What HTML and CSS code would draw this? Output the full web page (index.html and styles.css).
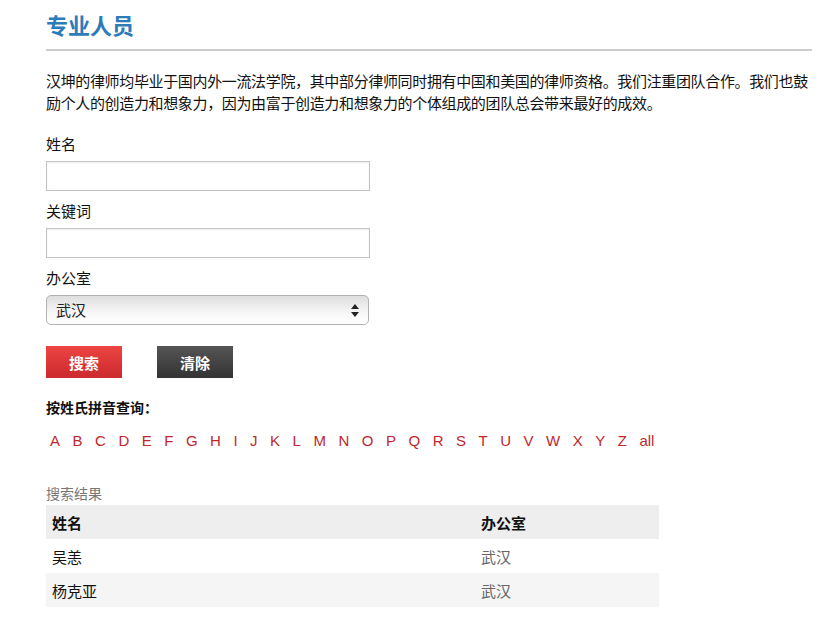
FILE: index.html
```html
<!DOCTYPE html>
<html lang="zh-CN">
<head>
    <meta charset="UTF-8">
    <title>专业人员</title>
    <link rel="stylesheet" href="styles.css">
</head>
<body>
    <div class="page">
        <h1 class="page-title">专业人员</h1>

        <p class="intro">汉坤的律师均毕业于国内外一流法学院，其中部分律师同时拥有中国和美国的律师资格。我们注重团队合作。我们也鼓励个人的创造力和想象力，因为由富于创造力和想象力的个体组成的团队总会带来最好的成效。</p>

        <form class="search-form">
            <label class="field-label first">姓名</label>
            <input class="text-input" type="text">

            <label class="field-label">关键词</label>
            <input class="text-input" type="text">

            <label class="field-label">办公室</label>
            <div class="select-wrap">
                <select class="select-input">
                    <option>武汉</option>
                </select>
                <svg class="select-arrows" width="8" height="13" viewBox="0 0 8 13">
                    <path d="M4 0 L8 5 L0 5 Z" fill="#222"/>
                    <path d="M0 8 L8 8 L4 13 Z" fill="#222"/>
                </svg>
            </div>

            <div class="buttons">
                <button type="button" class="btn btn-search">搜索</button>
                <button type="button" class="btn btn-clear">清除</button>
            </div>
        </form>

        <div class="pinyin-title">按姓氏拼音查询：</div>
        <div class="letters">
            <a href="#">A</a><a href="#">B</a><a href="#">C</a><a href="#">D</a><a href="#">E</a><a href="#">F</a><a href="#">G</a><a href="#">H</a><a href="#">I</a><a href="#">J</a><a href="#">K</a><a href="#">L</a><a href="#">M</a><a href="#">N</a><a href="#">O</a><a href="#">P</a><a href="#">Q</a><a href="#">R</a><a href="#">S</a><a href="#">T</a><a href="#">U</a><a href="#">V</a><a href="#">W</a><a href="#">X</a><a href="#">Y</a><a href="#">Z</a><a href="#">all</a>
        </div>

        <div class="results-title">搜索结果</div>
        <table class="results">
            <tr>
                <th class="col-name">姓名</th>
                <th>办公室</th>
            </tr>
            <tr>
                <td class="col-name">吴恙</td>
                <td class="office">武汉</td>
            </tr>
            <tr>
                <td class="col-name">杨克亚</td>
                <td class="office">武汉</td>
            </tr>
        </table>
    </div>
</body>
</html>
```

FILE: styles.css
```css
body {
    margin: 0;
    font-family: "Liberation Sans", "Noto Sans CJK SC", sans-serif;
    color: #111;
    background-color: #fff;
}
.page {
    width: 766px;
    padding: 0 18px 0 46px;
}
.page-title {
    margin: 12px 0 0;
    font-size: 22px;
    line-height: 30px;
    color: #2b7cb9;
    padding-bottom: 7px;
    border-bottom: 2px solid #ccc;
}
.intro {
    width: 772px;
    margin: 20px 0 0;
    font-size: 15px;
    letter-spacing: -0.35px;
    line-height: 22px;
}
.search-form {
    display: flex;
    flex-direction: column;
    align-items: flex-start;
}
.field-label {
    display: block;
    margin-top: 10px;
    margin-bottom: 5px;
    font-size: 15px;
    line-height: 22px;
}
.field-label.first {
    margin-top: 19px;
}
.text-input {
    box-sizing: border-box;
    width: 324px;
    height: 30px;
    margin: 0;
    border: 1px solid #c4c4c4;
    box-shadow: inset 0 1px 2px rgba(0, 0, 0, 0.08);
    font-size: 14px;
    padding: 0 8px;
}
.select-wrap {
    position: relative;
    width: 323px;
}
.select-input {
    box-sizing: border-box;
    width: 323px;
    height: 30px;
    margin: 0;
    -webkit-appearance: none;
    appearance: none;
    border: 1px solid #b3b3b3;
    border-radius: 5px;
    background: linear-gradient(#dedede, #f7f7f7 60%, #fff);
    font-family: "Liberation Sans", "Noto Sans CJK SC", sans-serif;
    font-size: 15px;
    color: #222;
    padding: 0 9px;
}
.select-arrows {
    position: absolute;
    right: 10px;
    top: 9px;
    pointer-events: none;
}
.buttons {
    display: flex;
    gap: 35px;
    margin-top: 21px;
}
.btn {
    width: 76px;
    height: 32px;
    border: none;
    color: #fff;
    font-family: "Liberation Sans", "Noto Sans CJK SC", sans-serif;
    font-size: 15px;
    font-weight: bold;
    padding: 0;
}
.btn-search {
    background: linear-gradient(#ec4442, #cc2a2e);
}
.btn-clear {
    background: linear-gradient(#555, #333);
}
.pinyin-title {
    margin-top: 19px;
    font-size: 14px;
    font-weight: bold;
    line-height: 22px;
}
.letters {
    display: flex;
    gap: 12.5px;
    margin-top: 11px;
    padding-left: 4px;
    font-size: 15px;
    line-height: 22px;
}
.letters a {
    color: #c0282d;
    text-decoration: none;
}
.results-title {
    margin-top: 31px;
    font-size: 14px;
    line-height: 22px;
    color: #777;
}
.results {
    width: 613px;
    border-collapse: collapse;
    font-size: 15px;
}
.results th,
.results td {
    height: 34px;
    padding: 0 6px;
    text-align: left;
}
.results th {
    background-color: #eee;
    font-weight: bold;
    color: #111;
}
.results .col-name {
    width: 417px;
}
.results tr:nth-child(odd) td {
    background-color: #f5f5f5;
}
.results .office {
    color: #666;
}
```
